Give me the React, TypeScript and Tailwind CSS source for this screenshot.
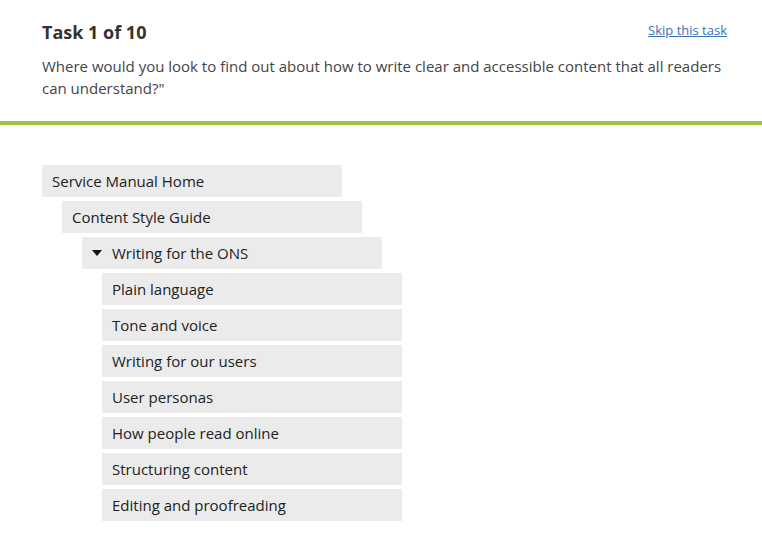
import React from "react";

const font = { fontFamily: '"Open Sans", "Liberation Sans", sans-serif' };

type Node = { label: string; depth: number; open?: boolean };

const TREE: Node[] = [
  { label: "Service Manual Home", depth: 0 },
  { label: "Content Style Guide", depth: 1 },
  { label: "Writing for the ONS", depth: 2, open: true },
  { label: "Plain language", depth: 3 },
  { label: "Tone and voice", depth: 3 },
  { label: "Writing for our users", depth: 3 },
  { label: "User personas", depth: 3 },
  { label: "How people read online", depth: 3 },
  { label: "Structuring content", depth: 3 },
  { label: "Editing and proofreading", depth: 3 },
];

const indent = ["ml-0", "ml-[20px]", "ml-[40px]", "ml-[60px]"];

export default function App() {
  return (
    <div className="min-h-[557px] w-[762px] bg-white" style={font}>
      {/* Task header */}
      <div className="pl-[42px] pr-[35px] pt-[19px] pb-[22px]">
        <div className="flex items-start justify-between">
          <h1 className="text-[18px] font-bold leading-[26px] text-[#333333]">Task 1 of 10</h1>
          <a href="#" className="mt-[2px] text-[13px] leading-[18px] text-[#3b6fb6] underline">
            Skip this task
          </a>
        </div>
        <p className="mt-[10px] text-[15px] leading-[22px] text-[#444444]">
          Where would you look to find out about how to write clear and accessible content that all readers can understand?"
        </p>
      </div>
      <div className="h-[4px] bg-[#9bc53d]" />

      {/* Tree */}
      <ul className="flex flex-col gap-[4px] pl-[42px] pt-[40px]">
        {TREE.map((n) => (
          <li
            key={n.label}
            className={`flex h-[32px] w-[300px] items-center bg-[#ebebeb] px-[10px] text-[15px] text-[#222222] ${indent[n.depth]}`}
          >
            {n.open && (
              <svg width="10" height="6" viewBox="0 0 10 6" className="mr-[10px]">
                <path d="M0 0 L10 0 L5 6 Z" fill="#111" />
              </svg>
            )}
            {n.label}
          </li>
        ))}
      </ul>
    </div>
  );
}
